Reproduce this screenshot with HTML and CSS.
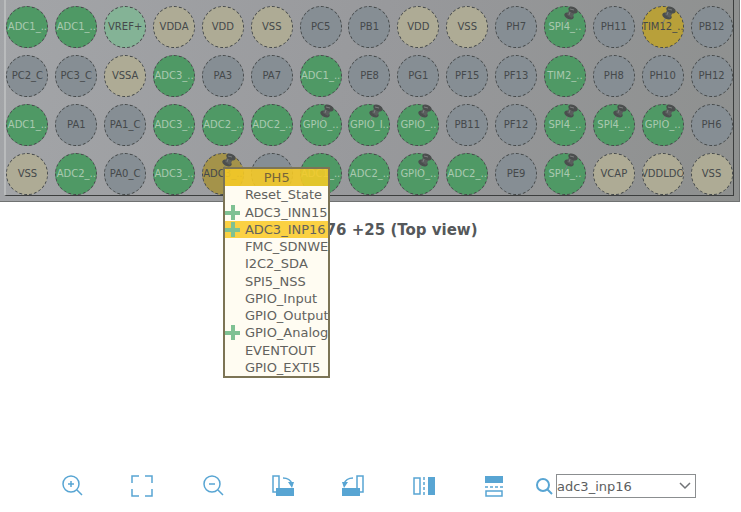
FILE: index.html
```html
<!DOCTYPE html>
<html lang="en">
<head>
    <meta charset="UTF-8">
    <title>Pinout view</title>
    <link rel="stylesheet" href="styles.css">
</head>
<body>
    <svg class="defs" aria-hidden="true">
        <symbol id="tack" viewBox="0 0 14 18">
            <path d="M4 11 L1 17" stroke="#7b7f7c" stroke-width="1"/>
            <ellipse cx="5" cy="10" rx="5" ry="3" transform="rotate(25 5 10)" fill="#4b4e4e"/>
            <path d="M5 4 L11 6 L8 12 L3 9 Z" fill="#5a5d5d"/>
            <ellipse cx="9" cy="4" rx="5" ry="3" transform="rotate(25 9 4)" fill="#4b4e4e"/>
            <path d="M6 3 L10 4 M6 6 L5 9" stroke="#7a7d7d" stroke-width="1"/>
        </symbol>
    </svg>

    <main>
        <div class="chip">
            <div class="frame">
                <div class="balls">
                    <div class="cell"><button class="pin used">ADC1_..</button></div>
                    <div class="cell"><button class="pin used">ADC1_..</button></div>
                    <div class="cell"><button class="pin vref">VREF+</button></div>
                    <div class="cell"><button class="pin power">VDDA</button></div>
                    <div class="cell"><button class="pin power">VDD</button></div>
                    <div class="cell"><button class="pin power">VSS</button></div>
                    <div class="cell"><button class="pin">PC5</button></div>
                    <div class="cell"><button class="pin">PB1</button></div>
                    <div class="cell"><button class="pin power">VDD</button></div>
                    <div class="cell"><button class="pin power">VSS</button></div>
                    <div class="cell"><button class="pin">PH7</button></div>
                    <div class="cell"><button class="pin used">SPI4_..</button><svg class="tack"><use href="#tack"/></svg></div>
                    <div class="cell"><button class="pin">PH11</button></div>
                    <div class="cell"><button class="pin warn">TIM12_..</button><svg class="tack"><use href="#tack"/></svg></div>
                    <div class="cell"><button class="pin">PB12</button></div>

                    <div class="cell"><button class="pin">PC2_C</button></div>
                    <div class="cell"><button class="pin">PC3_C</button></div>
                    <div class="cell"><button class="pin power">VSSA</button></div>
                    <div class="cell"><button class="pin used">ADC3_..</button></div>
                    <div class="cell"><button class="pin">PA3</button></div>
                    <div class="cell"><button class="pin">PA7</button></div>
                    <div class="cell"><button class="pin used">ADC1_..</button></div>
                    <div class="cell"><button class="pin">PE8</button></div>
                    <div class="cell"><button class="pin">PG1</button></div>
                    <div class="cell"><button class="pin">PF15</button></div>
                    <div class="cell"><button class="pin">PF13</button></div>
                    <div class="cell"><button class="pin used">TIM2_..</button></div>
                    <div class="cell"><button class="pin">PH8</button></div>
                    <div class="cell"><button class="pin">PH10</button></div>
                    <div class="cell"><button class="pin">PH12</button></div>

                    <div class="cell"><button class="pin used">ADC1_..</button></div>
                    <div class="cell"><button class="pin">PA1</button></div>
                    <div class="cell"><button class="pin">PA1_C</button></div>
                    <div class="cell"><button class="pin used">ADC3_..</button></div>
                    <div class="cell"><button class="pin used">ADC2_..</button></div>
                    <div class="cell"><button class="pin used">ADC2_..</button></div>
                    <div class="cell"><button class="pin used">GPIO_..</button><svg class="tack"><use href="#tack"/></svg></div>
                    <div class="cell"><button class="pin used">GPIO_I..</button><svg class="tack"><use href="#tack"/></svg></div>
                    <div class="cell"><button class="pin used">GPIO_..</button><svg class="tack"><use href="#tack"/></svg></div>
                    <div class="cell"><button class="pin">PB11</button></div>
                    <div class="cell"><button class="pin">PF12</button></div>
                    <div class="cell"><button class="pin used">SPI4_..</button><svg class="tack"><use href="#tack"/></svg></div>
                    <div class="cell"><button class="pin used">SPI4_..</button><svg class="tack"><use href="#tack"/></svg></div>
                    <div class="cell"><button class="pin used">GPIO_..</button><svg class="tack"><use href="#tack"/></svg></div>
                    <div class="cell"><button class="pin">PH6</button></div>

                    <div class="cell"><button class="pin power">VSS</button></div>
                    <div class="cell"><button class="pin used">ADC2_..</button></div>
                    <div class="cell"><button class="pin">PA0_C</button></div>
                    <div class="cell"><button class="pin used">ADC3_..</button></div>
                    <div class="cell">
                        <button class="pin warn dim">ADC3_..</button><svg class="tack"><use href="#tack"/></svg>
                        <ul class="menu">
                            <li class="head">PH5</li>
                            <li><button>Reset_State</button></li>
                            <li class="plus"><button>ADC3_INN15</button></li>
                            <li class="plus match"><button>ADC3_INP16</button></li>
                            <li><button>FMC_SDNWE</button></li>
                            <li><button>I2C2_SDA</button></li>
                            <li><button>SPI5_NSS</button></li>
                            <li><button>GPIO_Input</button></li>
                            <li><button>GPIO_Output</button></li>
                            <li class="plus"><button>GPIO_Analog</button></li>
                            <li><button>EVENTOUT</button></li>
                            <li><button>GPIO_EXTI5</button></li>
                        </ul>
                    </div>
                    <div class="cell"><button class="pin" aria-label="PH4"></button></div>
                    <div class="cell"><button class="pin used">ADC1_..</button></div>
                    <div class="cell"><button class="pin used">ADC2_..</button></div>
                    <div class="cell"><button class="pin used">GPIO_..</button><svg class="tack"><use href="#tack"/></svg></div>
                    <div class="cell"><button class="pin used">ADC2_..</button></div>
                    <div class="cell"><button class="pin">PE9</button></div>
                    <div class="cell"><button class="pin used">SPI4_..</button><svg class="tack"><use href="#tack"/></svg></div>
                    <div class="cell"><button class="pin power">VCAP</button></div>
                    <div class="cell"><button class="pin power">VDDLDO</button></div>
                    <div class="cell"><button class="pin power">VSS</button></div>
                </div>
            </div>
        </div>
        <h1>UFBGA176 +25 (Top view)</h1>
    </main>

    <div class="toolbar">
        <div class="tools">
            <button aria-label="Zoom in">
                <svg viewBox="0 0 22 22"><circle cx="10" cy="9" r="8"/><path d="M16 15 L21 20 M7 9 H13 M10 6 V12"/></svg>
            </button>
            <button aria-label="Best fit">
                <svg viewBox="0 0 22 22"><path d="M1 8 V1 H8 M14 1 H21 V8 M21 14 V21 H14 M8 21 H1 V14"/></svg>
            </button>
            <button aria-label="Zoom out">
                <svg viewBox="0 0 22 22"><circle cx="10" cy="9" r="8"/><path d="M16 15 L21 20 M7 9 H13"/></svg>
            </button>
            <button aria-label="Rotate right">
                <svg viewBox="0 0 22 22"><path d="M4 17 H1 V1 H7 V13 M11 3 Q18 3 20 9"/><path class="solid" d="M4 13 H22 V21 H4 Z M16 7 H22 L20 13 Z"/></svg>
            </button>
            <button aria-label="Rotate left">
                <svg viewBox="0 0 22 22"><path d="M18 17 H21 V1 H15 V13 M11 3 Q4 3 2 9"/><path class="solid" d="M0 13 H18 V21 H0 Z M0 7 H6 L2 13 Z"/></svg>
            </button>
            <button aria-label="Flip horizontal">
                <svg viewBox="0 0 22 22"><path d="M1 3 H7 V19 H1 Z"/><path d="M11 2 V20" stroke-dasharray="3 2"/><path class="solid" d="M15 2 H22 V20 H15 Z"/></svg>
            </button>
            <button aria-label="Flip vertical">
                <svg viewBox="0 0 22 22"><path class="solid" d="M2 1 H20 V8 H2 Z"/><path d="M2 12 H20" stroke-dasharray="3 2"/><path d="M3 16 H19 V21 H3 Z"/></svg>
            </button>
        </div>
        <div class="search">
            <label for="find" aria-label="Search">
                <svg viewBox="0 0 18 18"><circle cx="8" cy="8" r="6"/><path d="M12 12 L17 17"/></svg>
            </label>
            <div class="combo">
                <select id="find">
                    <option>adc3_inp16</option>
                </select>
                <svg viewBox="0 0 12 8"><path d="M1 1 L6 6 L11 1"/></svg>
            </div>
        </div>
    </div>
</body>
</html>
```
FILE: styles.css
```css
* {
    box-sizing: border-box;
}
body {
    margin: 0;
    min-height: 100vh;
    display: flex;
    flex-direction: column;
    background: #fff;
    font-family: "DejaVu Sans", sans-serif;
}
button {
    font-family: inherit;
    border: none;
    background: none;
    padding: 0;
    cursor: pointer;
}
.defs {
    position: absolute;
    width: 0;
    height: 0;
}

/* package */
.chip {
    margin-right: 1px;
    padding: 0 5px 5px 4px;
    background: linear-gradient(100deg, #a3a5a8 0%, #98999c 50%, #8e908f 100%);
    border-right: 1px solid #707272;
    border-bottom: 1px solid #707272;
}
.frame {
    border-left: 2px solid #b9bbbc;
    border-right: 1px solid #3c3e3e;
    border-bottom: 1px solid #3c3e3e;
}
.balls {
    display: grid;
    grid-template-columns: repeat(15, 1fr);
    grid-auto-rows: 49px;
    margin: 0 -3px;
    padding-top: 2px;
    height: 195px;
}
.cell {
    position: relative;
    display: flex;
    align-items: center;
    justify-content: center;
}
.pin {
    display: flex;
    flex: none;
    align-items: center;
    justify-content: center;
    width: 42px;
    height: 42px;
    border: 1px dashed #45494a;
    border-radius: 50%;
    overflow: hidden;
    background: #868e94;
    color: #45494b;
    font-size: 10px;
    line-height: 12px;
    white-space: nowrap;
}
.power {
    background: #aeab95;
}
.vref {
    background: #84b396;
}
.used {
    background: #4f9965;
    color: #a9c9b0;
}
.warn {
    background: #b8a03a;
}
.dim {
    background: #a4934a;
}
.tack {
    position: absolute;
    top: 4px;
    right: 11px;
    width: 14px;
    height: 18px;
    fill: none;
}
h1 {
    margin: 18px 0 0;
    padding-right: 6px;
    font-size: 15px;
    line-height: 20px;
    text-align: center;
    color: #55585a;
}

/* signal list of the selected pin */
.menu {
    position: absolute;
    z-index: 2;
    top: 18px;
    left: 50%;
    width: 107px;
    height: 211px;
    margin: 0;
    padding: 0;
    display: grid;
    grid-auto-rows: 1fr;
    list-style: none;
    border: 2px solid #7c7455;
    overflow: hidden;
    font-size: 13px;
    line-height: 17px;
    color: #62625e;
}
.menu li {
    position: relative;
    padding-left: 20px;
    background: #fffcf2;
}
.menu button {
    color: inherit;
    font-size: 13px;
    line-height: 17px;
    display: block;
    white-space: nowrap;
}
.menu .head {
    padding: 0;
    text-align: center;
    background: rgba(247, 203, 36, 0.88);
    color: #75653a;
}
.menu .match {
    background: #fbd143;
}
.plus::before,
.plus::after {
    content: "";
    position: absolute;
    background: #7fc193;
}
.plus::before {
    left: 0;
    top: 7px;
    width: 15px;
    height: 4px;
}
.plus::after {
    left: 6px;
    top: 1px;
    width: 4px;
    height: 15px;
}

/* bottom bar */
.toolbar {
    margin-top: auto;
    padding: 0 45px 14px 61px;
    display: flex;
    align-items: center;
    gap: 30px;
}
.tools {
    flex: 1;
    display: flex;
    justify-content: space-between;
}
.tools button {
    width: 22px;
    height: 22px;
}
.toolbar svg {
    display: block;
    fill: none;
    stroke: #58a5d3;
    stroke-width: 1.5;
}
.toolbar .solid {
    fill: #58a5d3;
    stroke: none;
}
.search {
    display: flex;
    align-items: center;
    gap: 3px;
}
.search label svg {
    width: 18px;
    height: 18px;
    stroke-width: 2;
}
.combo {
    position: relative;
}
.combo select {
    appearance: none;
    display: block;
    width: 140px;
    height: 24px;
    padding: 0 20px 0 0;
    border: 1px solid #8b8e90;
    border-radius: 0;
    background: #fff;
    color: #5c5e60;
    font-family: inherit;
    font-size: 13px;
}
.combo svg {
    position: absolute;
    right: 5px;
    top: 8px;
    width: 12px;
    height: 8px;
    stroke: #707376;
    pointer-events: none;
}
```
